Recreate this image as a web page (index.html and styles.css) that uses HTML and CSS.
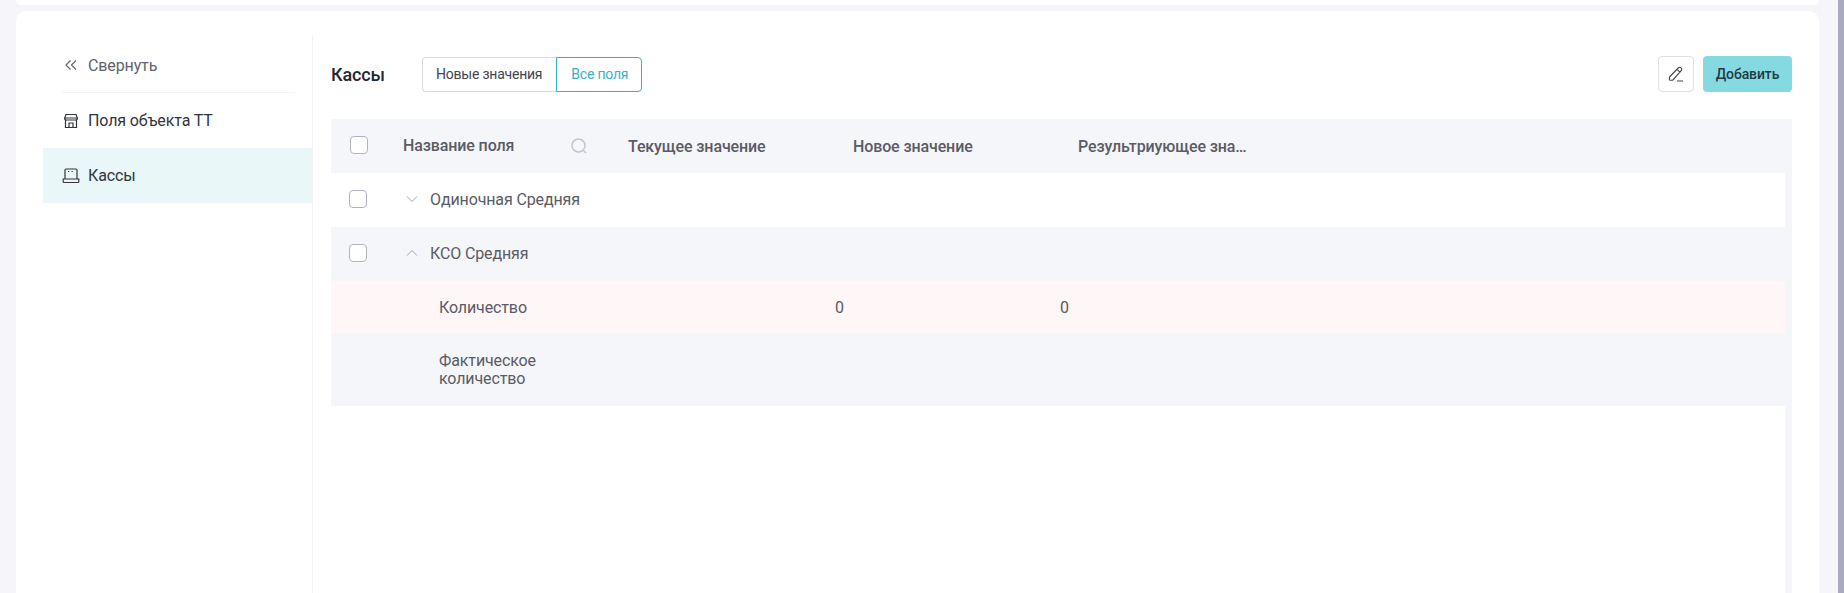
FILE: index.html
```html
<!DOCTYPE html>
<html>
	<head>
		<meta charset="UTF-8">
		<title>Кассы</title>
		<link rel="stylesheet" href="styles.css">
	</head>
	<body>
		<div class="page">
			<div class="top-card"></div>
			<div class="main-card">
				<div class="side">
					<div class="side-item side-collapse">
						<svg class="side-icon" width="20" height="20" viewBox="0 0 20 20" fill="none" stroke="#666870" stroke-width="1.2"><path d="M9.500 5.500 5 10l4.500 4.500M15 5.500 10.500 10l4.500 4.500"/></svg>
						<span>Свернуть</span>
					</div>
					<div class="side-line"></div>
					<div class="side-item">
						<svg class="side-icon" width="20" height="20" viewBox="0 0 20 20" fill="none" stroke="#33343c" stroke-width="1.2"><path d="M5 3.500h10l1.500 4a2 2 0 0 1-2.200 1.500H5.700A2 2 0 0 1 3.500 7.500zM3.800 7h12.400M4.500 9v7.500h11V9M8 16.500V12h4v4.500"/></svg>
						<span>Поля объекта ТТ</span>
					</div>
					<div class="side-item side-active">
						<svg class="side-icon" width="20" height="20" viewBox="0 0 20 20" fill="none" stroke="#33343c" stroke-width="1.2"><path d="M4 13V4a1 1 0 0 1 1-1h10a1 1 0 0 1 1 1v9M2.200 13h15.600v2.700a.8.8 0 0 1-.8.800H3a.8.8 0 0 1-.8-.8zM7 5.500h1.200M10.500 5.500h1.200"/></svg>
						<span>Кассы</span>
					</div>
				</div>
				<div class="content">
					<div class="toolbar">
						<div class="title">Кассы</div>
						<div class="switch">
							<div class="switch-btn">Новые значения</div>
							<div class="switch-btn switch-on">Все поля</div>
						</div>
						<div class="tools">
							<div class="edit-btn">
								<svg width="18" height="18" viewBox="0 0 18 18" fill="none" stroke="#44454d" stroke-width="1.100"><path d="M2.500 12 11.200 3a2 2 0 0 1 3 2.700L5.800 15.200H3a.6.6 0 0 1-.6-.6zM10 16h6M10 4.300l3 2.800"/></svg>
							</div>
							<div class="add-btn">Добавить</div>
						</div>
					</div>
					<div class="table">
						<div class="row head">
							<div class="cell-check"><span class="check check-head"></span></div>
							<div class="cell-name">
								<span>Название поля</span>
								<svg class="search" width="20" height="20" viewBox="0 0 20 20" fill="none" stroke="#c4c5cc" stroke-width="1.500"><circle cx="9.500" cy="9.500" r="6.500"/><path d="m14.500 14.500 2.500 2.500"/></svg>
							</div>
							<div class="cell">Текущее значение</div>
							<div class="cell">Новое значение</div>
							<div class="cell">Результриующее зна…</div>
						</div>
						<div class="row row-group">
							<div class="cell-check"><span class="check"></span></div>
							<div class="cell-tree">
								<svg width="14" height="14" viewBox="0 0 14 14" fill="none" stroke="#a0a1aa" stroke-width="1"><path d="m2 4.500 5 5 5-5"/></svg>
								<span>Одиночная Средняя</span>
							</div>
						</div>
						<div class="row row-group row-grey">
							<div class="cell-check"><span class="check"></span></div>
							<div class="cell-tree">
								<svg width="14" height="14" viewBox="0 0 14 14" fill="none" stroke="#a0a1aa" stroke-width="1"><path d="m2 9.500 5-5 5 5"/></svg>
								<span>КСО Средняя</span>
							</div>
						</div>
						<div class="row row-pink">
							<div class="cell-child">Количество</div>
							<div class="cell-val">0</div>
							<div class="cell-val">0</div>
						</div>
						<div class="row row-grey row-tall">
							<div class="cell-child">Фактическое<br>количество</div>
						</div>
					</div>
				</div>
			</div>
		</div>
		<div class="scroll"></div>
	</body>
</html>
```

FILE: styles.css
```css
* {
	margin: 0;
	padding: 0;
	box-sizing: border-box;
}

html, body {
	height: 100%;
	overflow: hidden;
}

body {
	display: flex;
	background: #f5f5fa;
	font-family: Roboto, "Liberation Sans", sans-serif;
	font-size: 16px;
	letter-spacing: -0.12px;
	color: #5a5b63;
}

.page {
	flex: 1;
	padding: 0 19px 0 16px;
	display: flex;
	flex-direction: column;
	gap: 6px;
	height: 100%;
}

.scroll {
	width: 6px;
	background: #a9a9c0;
}

.top-card {
	height: 5px;
	flex-shrink: 0;
	background: #fff;
	border-radius: 0 0 8px 8px;
}

.main-card {
	flex: 1;
	min-height: 0;
	overflow: hidden;
	display: flex;
	background: #fff;
	border-radius: 10px 10px 0 0;
	padding: 25px 27px 0 27px;
}

/* боковое меню */
.side {
	width: 270px;
	border-right: 1px solid #f3f3f7;
	flex-shrink: 0;
}

.side-item {
	height: 55px;
	display: flex;
	align-items: center;
	padding-left: 18px;
	color: #33343c;
}

.side-collapse {
	height: 56px;
	padding-top: 2px;
	color: #62636b;
}

.side-icon {
	margin-right: 7px;
}

.side-line {
	height: 1px;
	margin: 0 17px 0 19px;
	background: #f3f3f7;
}

.side-active {
	background: #e9f7f9;
}

/* таблица */
.content {
	flex: 1;
	min-width: 0;
	padding-left: 18px;
}

.toolbar {
	display: flex;
	align-items: center;
	height: 36px;
	margin-top: 20px;
}

.title {
	width: 91px;
	font-size: 18px;
	font-weight: 500;
	color: #26272e;
}

.switch {
	display: flex;
}

.switch-btn {
	height: 35px;
	line-height: 33px;
	padding: 0 14px 0 13px;
	font-size: 14px;
	letter-spacing: -0.22px;
	color: #44454d;
	border: 1px solid #d9d9df;
	border-right: none;
	border-radius: 4px 0 0 4px;
}

.switch-on {
	padding: 0 13px 0 14px;
	color: #35b3c4;
	border: 1px solid #35b3c4;
	border-radius: 0 4px 4px 0;
}

.tools {
	margin-left: auto;
	display: flex;
	gap: 9px;
}

.edit-btn {
	width: 36px;
	height: 36px;
	border: 1px solid #dedee3;
	border-radius: 4px;
	display: flex;
	align-items: center;
	justify-content: center;
}

.add-btn {
	width: 89px;
	height: 36px;
	line-height: 36px;
	text-align: center;
	font-size: 14px;
	font-weight: 500;
	color: #1f3b47;
	background: #85dae2;
	border-radius: 4px;
}

.table {
	margin-top: 27px;
	padding-right: 7px;
	box-shadow: inset -7px 0 0 #f5f6fa;
	height: 500px;
}

.row {
	display: flex;
	align-items: center;
	height: 54px;
}

.row-group {
	padding-bottom: 2px;
}

.head {
	margin-right: -7px;
	background: #f5f6fa;
	font-weight: 500;
}

.row-grey {
	background: #f5f6fa;
}

.row-pink {
	background: #fff6f7;
	height: 53px;
}

.row-tall {
	height: 72px;
	line-height: 18px;
}

.cell-check {
	width: 72px;
	flex-shrink: 0;
	padding-left: 18px;
	display: flex;
}

.check {
	width: 18px;
	height: 18px;
	background: #fff;
	border: 1px solid #b3b3bd;
	border-radius: 4px;
}

.check-head {
	margin: -2px 0 0 1px;
}

.cell-name {
	width: 225px;
	display: flex;
	justify-content: space-between;
	padding-right: 39px;
}

.cell {
	width: 225px;
	white-space: nowrap;
}

.cell-tree {
	display: flex;
	align-items: center;
	gap: 11px;
	padding-left: 2px;
}

.cell-child {
	width: 504px;
	padding-left: 108px;
}

.cell-val {
	width: 225px;
}
```
